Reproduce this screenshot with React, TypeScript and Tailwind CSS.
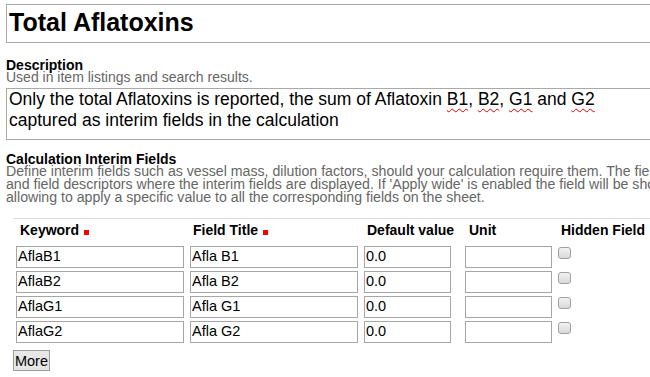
import React from "react";

const font = { fontFamily: '"Liberation Sans", Arial, Helvetica, sans-serif' };

function Box({ w, text }: { w: string; text: string }) {
  return (
    <div
      className={`${w} h-[22px] border border-[#a6a6a6] bg-white pl-[1px] pt-[1px] text-[14.5px] leading-[16px] text-black whitespace-nowrap overflow-hidden`}
    >
      {text}
    </div>
  );
}

function Check() {
  return (
    <div className="mt-[1px] w-[13px] h-[12px] rounded-[3px] border border-[#a0a0a0] bg-gradient-to-b from-[#f2f2f2] to-[#d9d9d9]" />
  );
}

const rows = [
  ["AflaB1", "Afla B1"],
  ["AflaB2", "Afla B2"],
  ["AflaG1", "Afla G1"],
  ["AflaG2", "Afla G2"],
];

function Req() {
  return <span className="inline-block w-[5px] h-[5px] bg-[#ff0000] ml-[5px]" />;
}

export default function App() {
  return (
    <div
      className="w-[650px] h-[377px] overflow-hidden bg-white text-black relative"
      style={font}
    >
      <div className="w-[1100px] pt-[4px] pl-[6px]">
        <div className="w-[1000px] h-[39px] border border-[#a9a9a9] pt-[3px] pl-[2px] text-[25px] leading-[28px] font-bold whitespace-nowrap">
          Total Aflatoxins
        </div>

        <div className="mt-[16px] text-[14px] leading-[12px] font-bold">Description</div>
        <div className="text-[14px] leading-[13px] text-[#666666]">
          Used in item listings and search results.
        </div>

        <div className="mt-[4px] w-[1000px] h-[52px] border border-[#a9a9a9] pl-[2px] text-[17.5px] leading-[21px] whitespace-nowrap">
          Only the total Aflatoxins is reported, the sum of Aflatoxin{" "}
          <span className="underline decoration-wavy decoration-[#e00000] decoration-1 underline-offset-[3px]">B1</span>,{" "}
          <span className="underline decoration-wavy decoration-[#e00000] decoration-1 underline-offset-[3px]">B2</span>,{" "}
          <span className="underline decoration-wavy decoration-[#e00000] decoration-1 underline-offset-[3px]">G1</span> and{" "}
          <span className="underline decoration-wavy decoration-[#e00000] decoration-1 underline-offset-[3px]">G2</span>
          <br />
          captured as interim fields in the calculation
        </div>

        <div className="mt-[13px] text-[14px] leading-[12px] font-bold">Calculation Interim Fields</div>
        <div className="text-[14.15px] leading-[13px] text-[#666666] whitespace-nowrap">
          Define interim fields such as vessel mass, dilution factors, should your calculation require them. The field title specified here will be used as column headers
          <br />
          and field descriptors where the interim fields are displayed. If 'Apply wide' is enabled the field will be shown in a selection box on the top of the worksheet,
          <br />
          allowing to apply a specific value to all the corresponding fields on the sheet.
        </div>

        <div className="mt-[14px] ml-[7px] w-[1000px] border-t border-[#dddddd]">
          <div className="h-[27px] pt-[3px] pl-[3px] flex text-[14px] leading-[16px] font-bold whitespace-nowrap">
            <div className="w-[174px] pl-[4px]">
              Keyword
              <Req />
            </div>
            <div className="w-[174px] pl-[3px]">
              Field Title
              <Req />
            </div>
            <div className="w-[101px] pl-[3px]">Default value</div>
            <div className="w-[93px] pl-[4px]">Unit</div>
            <div className="pl-[3px]">Hidden Field</div>
          </div>
          <div className="flex flex-col gap-[3px] pl-[3px]">
            {rows.map(([k, t]) => (
              <div key={k} className="flex h-[22px]">
                <div className="w-[174px]">
                  <Box w="w-[168px]" text={k} />
                </div>
                <div className="w-[174px]">
                  <Box w="w-[168px]" text={t} />
                </div>
                <div className="w-[101px]">
                  <Box w="w-[87px]" text="0.0" />
                </div>
                <div className="w-[93px]">
                  <Box w="w-[87px]" text="" />
                </div>
                <div>
                  <Check />
                </div>
              </div>
            ))}
          </div>
          <div className="mt-[7px]">
            <button className="h-[21px] w-[37px] border border-[#9c9c9c] bg-[#e6e6e6] text-[14.5px] leading-[16px] text-black flex items-center justify-center" style={font}>
              More
            </button>
          </div>
        </div>
      </div>
    </div>
  );
}
